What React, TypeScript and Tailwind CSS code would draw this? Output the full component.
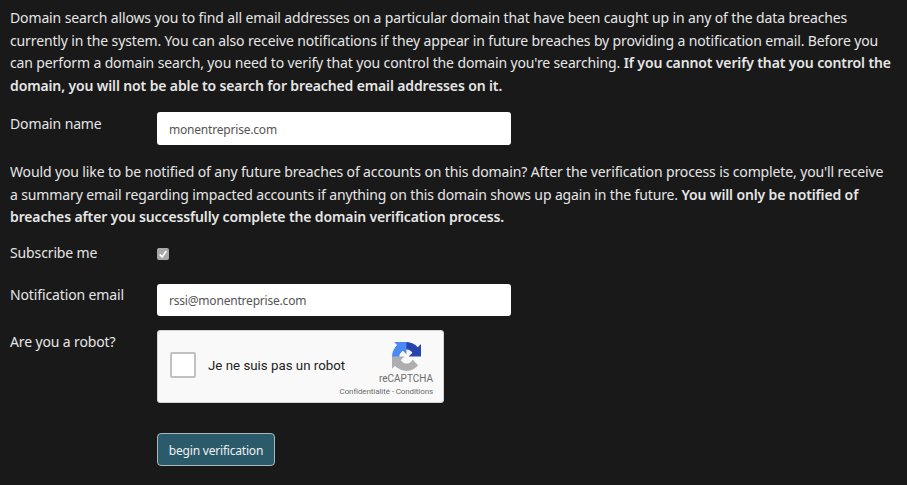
import React from 'react';

const font = "font-['Noto_Sans','Open_Sans',sans-serif]";

function RecaptchaLogo() {
  return (
    <svg viewBox="0 0 64 64" className="w-[29px] h-[29px] mr-[12px]">
      <path d="M64 31.955l-.033-1.37V4.687l-7.16 7.16C50.948 4.674 42.033.093 32.05.093c-10.4 0-19.622 4.957-25.458 12.632l11.736 11.86a15.55 15.55 0 0 1 4.754-5.334c2.05-1.6 4.952-2.906 8.968-2.906.485 0 .86.057 1.135.163 4.976.393 9.288 3.14 11.828 7.124l-8.307 8.307 26.294.015" fill="#1c3aa9" />
      <path d="M31.862.001l-1.37.033H4.594l7.16 7.16C4.58 13.054 0 21.97 0 31.953c0 10.4 4.957 19.622 12.632 25.458l11.86-11.736a15.55 15.55 0 0 1-5.334-4.754c-1.6-2.05-2.906-4.952-2.906-8.968 0-.485.057-.86.163-1.135.393-4.976 3.14-9.288 7.124-11.828l8.307 8.307L31.862 0" fill="#4285f4" />
      <path d="M.001 31.955l.033 1.37v25.9l7.16-7.16c5.86 7.173 14.774 11.754 24.76 11.754 10.4 0 19.622-4.957 25.458-12.632l-11.736-11.86a15.55 15.55 0 0 1-4.754 5.334c-2.05 1.6-4.952 2.906-8.968 2.906-.485 0-.86-.057-1.135-.163-4.976-.393-9.288-3.14-11.828-7.124l8.307-8.307-26.294-.015" fill="#ababab" />
    </svg>
  );
}

export default function App() {
  return (
    <div className={`w-[907px] h-[485px] overflow-hidden bg-[#191919] text-[#e6e6e6] pl-[10px] pt-[7px] text-[14px] tracking-[-0.13px] leading-[22.7px] ${font}`}>
      <p className="w-[890px]">
        Domain search allows you to find all email addresses on a particular domain that have been caught up in any of the data breaches currently in the system. You can also receive notifications if they appear in future breaches by providing a notification email. Before you can perform a domain search, you need to verify that you control the domain you're searching.{' '}
        <b className="font-semibold">If you cannot verify that you control the domain, you will not be able to search for breached email addresses on it.</b>
      </p>

      <div className="flex mt-[14px]">
        <label className="w-[147px] pt-[1px]">Domain name</label>
        <div className="w-[354px] h-[33px] bg-white rounded-[3px] pl-3 pt-[4px] flex items-center text-[12px] tracking-[-0.2px] text-[#555]">monentreprise.com</div>
      </div>

      <p className="w-[880px] mt-[16px]">
        Would you like to be notified of any future breaches of accounts on this domain? After the verification process is complete, you'll receive a summary email regarding impacted accounts if anything on this domain shows up again in the future.{' '}
        <b className="font-semibold">You will only be notified of breaches after you successfully complete the domain verification process.</b>
      </p>

      <div className="flex mt-[13px] h-[24px]">
        <label className="w-[147px]">Subscribe me</label>
        <div className="w-[12px] h-[12px] mt-[6px] bg-[#a8a8a8] rounded-[2px] flex items-center justify-center">
          <svg viewBox="0 0 12 12" className="w-[10px] h-[10px]">
            <path d="M2 6.5 L5 9.5 L10 2.5" fill="none" stroke="#fff" strokeWidth="2" />
          </svg>
        </div>
      </div>

      <div className="flex mt-[18px]">
        <label className="w-[147px]">Notification email</label>
        <div className="w-[354px] h-[32px] bg-white rounded-[3px] pl-3 pt-[3px] flex items-center text-[12px] tracking-[-0.2px] text-[#555]">rssi@monentreprise.com</div>
      </div>

      <div className="flex mt-[14px]">
        <label className="w-[147px] pt-[1px]">Are you a robot?</label>
        <div className="w-[287px] h-[73px] bg-[#f9f9f9] border border-[#d3d3d3] rounded-[3px] flex tracking-normal font-['Roboto',sans-serif] text-[#222]">
          <div className="shrink-0 w-[26px] h-[26px] ml-[12px] mt-[21px] bg-white border-2 border-[#c1c1c1] rounded-[2px]" />
          <div className="shrink-0 w-[149px] ml-[12px] mt-[24px] text-[13.3px] leading-[22px]">Je ne suis pas un robot</div>
          <div className="shrink-0 w-[86px] flex flex-col items-end pt-[11px] pr-[10px] text-[#666] opacity-95">
            <RecaptchaLogo />
            <div className="text-[10px] leading-[12px] mt-[2px]">reCAPTCHA</div>
            <div className="text-[8px] tracking-[-0.1px] leading-[10px] mt-[2px] whitespace-nowrap">Confidentialité - Conditions</div>
          </div>
        </div>
      </div>

      <div className="ml-[147px] mt-[30px]">
        <button className="w-[118px] h-[33px] pt-[3px] bg-[#2b5a6b] border border-[#a9b8bd] rounded-[4px] text-[#f0f0f0] text-[12px] tracking-[-0.2px]">begin verification</button>
      </div>
    </div>
  );
}
